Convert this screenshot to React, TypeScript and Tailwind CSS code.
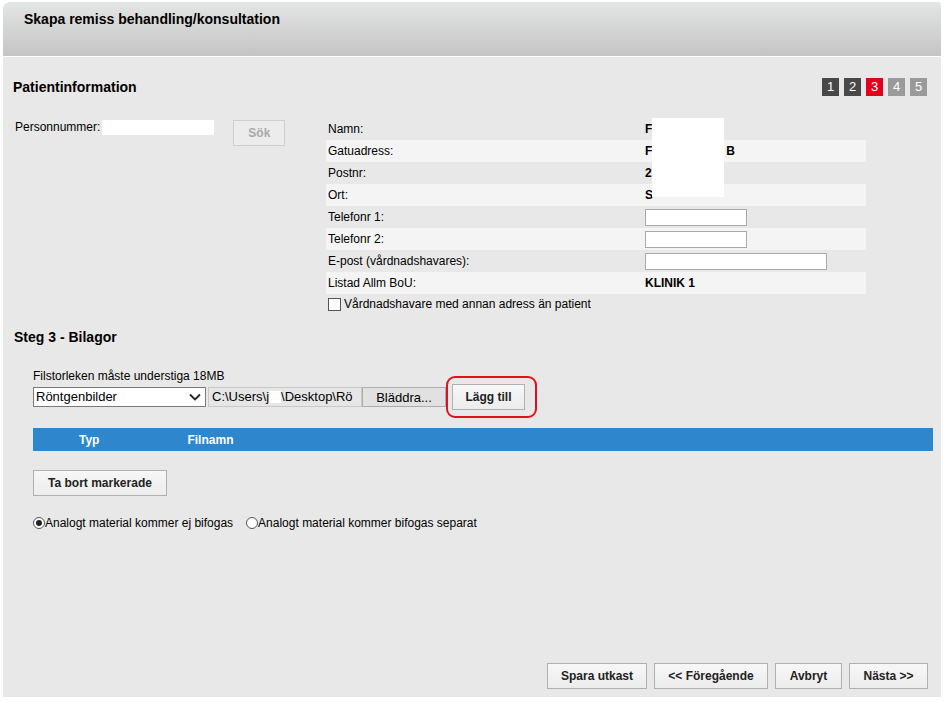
import React from 'react';

const font = { fontFamily: '"Liberation Sans", Arial, sans-serif' };

const rows: { label: string; value?: React.ReactNode }[] = [
  { label: 'Namn:', value: <span className="font-bold">F</span> },
  { label: 'Gatuadress:', value: <span className="font-bold">F<span className="ml-[74px]">B</span></span> },
  { label: 'Postnr:', value: <span className="font-bold">2</span> },
  { label: 'Ort:', value: <span className="font-bold">S</span> },
  { label: 'Telefonr 1:', value: <input className="w-[102px] h-[17px] bg-white border border-[#a9a9a9] outline-none" /> },
  { label: 'Telefonr 2:', value: <input className="w-[102px] h-[17px] bg-white border border-[#a9a9a9] outline-none" /> },
  { label: 'E-post (vårdnadshavares):', value: <input className="w-[182px] h-[17px] bg-white border border-[#a9a9a9] outline-none" /> },
  { label: 'Listad Allm BoU:', value: <span className="font-bold">KLINIK 1</span> },
];

const steps = [
  { n: 1, cls: 'bg-[#484848]' },
  { n: 2, cls: 'bg-[#484848]' },
  { n: 3, cls: 'bg-[#e3001b]' },
  { n: 4, cls: 'bg-[#9a9a9a]' },
  { n: 5, cls: 'bg-[#9a9a9a]' },
];

const Btn: React.FC<{ children: React.ReactNode; className?: string }> = ({ children, className = '' }) => (
  <button
    className={`h-[26px] border border-[#b0b0b0] bg-gradient-to-b from-[#f7f7f7] to-[#ececec] text-[12px] font-bold text-[#222] ${className}`}
  >
    {children}
  </button>
);

const Radio: React.FC<{ checked?: boolean }> = ({ checked }) => (
  <span className="w-[12px] h-[12px] rounded-full border border-[#555] bg-white flex items-center justify-center shrink-0">
    {checked && <span className="w-[6px] h-[6px] rounded-full bg-[#222]" />}
  </span>
);

export default function App() {
  return (
    <div className="w-[947px] h-[702px] bg-white pl-[3px] pt-[2px] text-black" style={font}>
      <div className="w-[938px] h-[695px] flex flex-col">
        {/* Header */}
        <div className="h-[54px] rounded-tl-[7px] rounded-tr-[3px] bg-gradient-to-b from-[#e4e5e5] to-[#c4c4c4] pl-[21px] pt-[8px]">
          <h1 className="text-[14px] leading-[18px] font-bold">Skapa remiss behandling/konsultation</h1>
        </div>
        <div className="h-[1px] bg-white" />

        {/* Body */}
        <div className="flex-1 bg-[#e8e8e8] flex flex-col">
          <div className="mt-[21px] h-[18px] flex items-center justify-between pl-[10px] pr-[14px]">
            <h2 className="text-[14px] leading-[18px] font-bold">Patientinformation</h2>
            <div className="flex gap-[5px]">
              {steps.map(s => (
                <span key={s.n} className={`w-[17px] h-[18px] ${s.cls} text-white text-[13px] leading-[18px] text-center`}>
                  {s.n}
                </span>
              ))}
            </div>
          </div>

          <div className="mt-[22px] flex">
            <div className="w-[323px] pl-[12px] pt-[2px] flex items-start">
              <span className="text-[12px] leading-[15px]">Personnummer:</span>
              <span className="ml-[2px] w-[112px] h-[15px] bg-white" />
              <button className="ml-[19px] w-[52px] h-[26px] border border-[#cfcfcf] bg-[#ececec] text-[12px] font-bold text-[#a8a8a8]">
                Sök
              </button>
            </div>

            <div className="w-[540px] relative">
              {rows.map((r, i) => (
                <div key={r.label} className={`h-[22px] flex items-center text-[12px] ${i % 2 === 1 ? 'bg-[#f4f4f4]' : ''}`}>
                  <span className="w-[319px] pl-[2px]">{r.label}</span>
                  <span className="flex items-center">{r.value}</span>
                </div>
              ))}
              <div className="h-[20px] flex items-center pl-[2px] text-[12px]">
                <span className="w-[13px] h-[13px] border border-[#555] bg-white mr-[3px]" />
                Vårdnadshavare med annan adress än patient
              </div>
              {/* redaction box */}
              <span className="absolute left-[326px] top-0 w-[72px] h-[79px] bg-white" />
            </div>
          </div>

          <h2 className="mt-[14px] pl-[11px] text-[14px] leading-[18px] font-bold">Steg 3 - Bilagor</h2>

          <div className="pl-[30px] flex flex-col">
            <p className="mt-[23px] text-[12px] leading-[14px]">Filstorleken måste understiga 18MB</p>

            <div className="mt-[2px] h-[23px] flex items-center">
              <div className="w-[173px] h-[20px] bg-white border border-[#7a7a7a] flex items-center justify-between pl-[2px] pr-[4px] text-[13px]">
                <span>Röntgenbilder</span>
                <svg width="12" height="8" viewBox="0 0 12 8" fill="none" stroke="#222" strokeWidth="1.8">
                  <path d="M1 1.5 6 6.5 11 1.5" />
                </svg>
              </div>
              <div className="ml-[2px] w-[154px] h-[20px] bg-[#e6e6e6] border border-[#c8c8c8] flex items-center pl-[3px] text-[13px] whitespace-nowrap">
                C:\Users\j<span className="inline-block w-[12px] h-[12px] bg-white" />\Desktop\Rö
              </div>
              <button className="w-[84px] h-[20px] bg-[#e1e1e1] border border-[#adadad] text-[13px]">Bläddra...</button>
              <div className="relative ml-[6px]">
                <span className="absolute -left-[6px] -right-[12px] -top-[8px] -bottom-[8px] border-2 border-[#e2101e] rounded-[9px]" />
                <Btn className="w-[73px] h-[23px]">Lägg till</Btn>
              </div>
            </div>

            <div className="mt-[20px] w-[900px] h-[23px] bg-[#2e86cc] flex items-center text-white text-[12px] font-bold">
              <span className="ml-[46px]">Typ</span>
              <span className="ml-[88px]">Filnamn</span>
            </div>

            <Btn className="mt-[19px] w-[134px] h-[25px]">Ta bort markerade</Btn>

            <div className="mt-[20px] flex items-center text-[12px] leading-[14px]">
              <Radio checked />
              <span>Analogt material kommer ej bifogas</span>
              <span className="ml-[13px]"><Radio /></span>
              <span>Analogt material kommer bifogas separat</span>
            </div>
          </div>

          <div className="flex-1" />

          <div className="flex justify-end gap-[7px] pr-[13px] pb-[8px]">
            <Btn className="w-[100px] h-[25px]">Spara utkast</Btn>
            <Btn className="w-[114px] h-[25px]">&lt;&lt; Föregående</Btn>
            <Btn className="w-[67px] h-[25px]">Avbryt</Btn>
            <Btn className="w-[79px] h-[25px]">Nästa &gt;&gt;</Btn>
          </div>
        </div>
      </div>
    </div>
  );
}
